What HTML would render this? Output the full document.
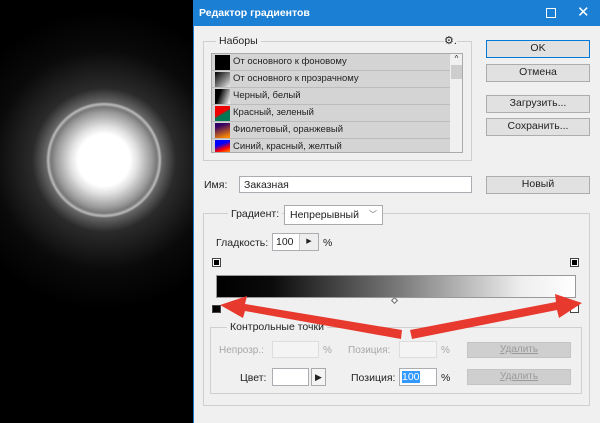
<!DOCTYPE html>
<html><head><meta charset="utf-8"><style>
*{margin:0;padding:0;box-sizing:border-box}
body{width:600px;height:423px;overflow:hidden;background:#000;position:relative;font-family:"Liberation Sans","DejaVu Sans",sans-serif;font-size:10px;color:#222}
.a{position:absolute}
.dlg{left:193px;top:0;width:407px;height:423px;background:#f0f0f0;border-left:1px solid #1a7bd0}
.title{left:193px;top:0;width:407px;height:26px;background:#1b7fd4;color:#fff;font-size:10.5px;font-weight:bold}
.btn{position:absolute;background:#e1e1e1;border:1px solid #adadad;text-align:center;font-size:10.5px;line-height:15px}
.grp{position:absolute;border:1px solid #cfcfcf}
.lbl{position:absolute;background:#f0f0f0;padding:0 3px;font-size:10.5px}
.row{position:absolute;left:0;width:238px;height:17px;background:#d4d4d4;border-bottom:1px solid #bcbcbc;font-size:9.5px;line-height:16px;padding-left:21px}
.sw{position:absolute;left:3px;top:1px;width:15px;height:15px}
.inp{position:absolute;background:#fff;border:1px solid #abadb3;font-size:10.5px}
.dis{color:#a8a8a8}
.dbtn{position:absolute;background:#cfcfcf;border:1px solid #c4c4c4;color:#9a9a9a;text-align:center;font-size:10px;line-height:14px;text-decoration:underline}
</style></head><body>
<div class="a" style="left:0;top:0;width:193px;height:423px;background:radial-gradient(circle at 104px 160px,#fff 0,#fff 26px,#e0e0e0 34px,#999 48px,#777 53px,#bbb 56px,#666 58px,#2a2a2a 72px,#0a0a0a 110px,#000 150px)"></div>
<div class="a dlg"></div>
<div class="a title"><span class="a" style="left:6px;top:7px">Редактор градиентов</span>
<span class="a" style="left:353px;top:8px;width:10px;height:10px;border:1px solid #fff"></span>
<span class="a" style="left:384px;top:3px;font-size:15px;font-weight:normal">✕</span></div>

<div class="grp" style="left:203px;top:41px;width:269px;height:120px"></div>
<div class="lbl" style="left:216px;top:35px">Наборы</div>
<div class="a" style="left:444px;top:34px;font-size:11px;background:#f0f0f0">⚙.</div>
<div class="a" style="left:211px;top:53px;width:252px;height:100px;border:1px solid #aaa;overflow:hidden;background:#d4d4d4">
<div class="row" style="top:0"><span class="sw" style="background:#000"></span>От основного к фоновому</div>
<div class="row" style="top:17px"><span class="sw" style="background:linear-gradient(135deg,#000,#888 60%,#eee)"></span>От основного к прозрачному</div>
<div class="row" style="top:34px"><span class="sw" style="background:linear-gradient(110deg,#000 30%,#fff)"></span>Черный, белый</div>
<div class="row" style="top:51px"><span class="sw" style="background:linear-gradient(150deg,#e00 45%,#075 55%)"></span>Красный, зеленый</div>
<div class="row" style="top:68px"><span class="sw" style="background:linear-gradient(160deg,#306 20%,#f80 90%)"></span>Фиолетовый, оранжевый</div>
<div class="row" style="top:85px"><span class="sw" style="background:linear-gradient(160deg,#00f 30%,#f00 60%,#fd0)"></span>Синий, красный, желтый</div>
<div class="a" style="left:238px;top:0;width:13px;height:100px;background:#f0f0f0;font-size:8px;text-align:center">^<div style="background:#cdcdcd;height:14px;margin:2px 1px"></div></div>
</div>

<div class="btn" style="left:486px;top:40px;width:104px;height:18px;border:1px solid #0078d7">OK</div>
<div class="btn" style="left:486px;top:64px;width:104px;height:18px">Отмена</div>
<div class="btn" style="left:486px;top:95px;width:104px;height:18px">Загрузить...</div>
<div class="btn" style="left:486px;top:118px;width:104px;height:18px">Сохранить...</div>

<div class="a" style="left:204px;top:179px;font-size:10.5px">Имя:</div>
<div class="inp" style="left:239px;top:176px;width:233px;height:17px;padding:2px 4px">Заказная</div>
<div class="btn" style="left:486px;top:176px;width:104px;height:18px">Новый</div>

<div class="grp" style="left:203px;top:213px;width:387px;height:193px"></div>
<div class="lbl" style="left:228px;top:208px">Градиент:</div>
<div class="inp" style="left:284px;top:205px;width:99px;height:20px;padding:3px 5px;border-color:#aaa">Непрерывный <span style="position:absolute;right:5px;font-size:8px;color:#666">﹀</span></div>
<div class="a" style="left:216px;top:237px;font-size:10.5px">Гладкость:</div>
<div class="inp" style="left:272px;top:233px;width:47px;height:18px;padding:2px 3px">100<span style="position:absolute;left:26px;top:0;width:19px;height:16px;background:#eee;border-left:1px solid #ccc;text-align:center;font-size:7px;line-height:16px">▶</span></div>
<div class="a" style="left:323px;top:237px;font-size:10.5px">%</div>

<div class="a" style="left:212px;top:258px;width:9px;height:9px;border:1px solid #444;background:#000;box-shadow:inset 0 0 0 1px #fff"></div>
<div class="a" style="left:570px;top:258px;width:9px;height:9px;border:1px solid #444;background:#000;box-shadow:inset 0 0 0 1px #fff"></div>
<div class="a" style="left:216px;top:275px;width:360px;height:23px;background:linear-gradient(90deg,#000,#0a0a0a 15%,#777 50%,#eee 85%,#fff);border:1px solid #999"></div>
<div class="a" style="left:392px;top:298px;width:5px;height:5px;border:1px solid #666;transform:rotate(45deg);background:#fff"></div>
<div class="a" style="left:212px;top:305px;width:9px;height:8px;border:1px solid #444;background:#000"></div>
<div class="a" style="left:570px;top:305px;width:9px;height:8px;border:1px solid #444;background:#fff"></div>

<div class="grp" style="left:210px;top:327px;width:372px;height:67px"></div>
<div class="lbl" style="left:227px;top:321px">Контрольные точки</div>
<div class="a dis" style="left:219px;top:345px;font-size:10px">Непрозр.:</div>
<div class="inp" style="left:272px;top:341px;width:47px;height:17px;border-color:#ddd;background:#f4f4f4"></div>
<div class="a dis" style="left:323px;top:345px">%</div>
<div class="a dis" style="left:348px;top:345px">Позиция:</div>
<div class="inp" style="left:399px;top:341px;width:38px;height:17px;border-color:#ddd;background:#f4f4f4"></div>
<div class="a dis" style="left:441px;top:345px">%</div>
<div class="dbtn" style="left:467px;top:342px;width:104px;height:16px">Удалить</div>
<div class="a" style="left:240px;top:372px;font-size:10.5px">Цвет:</div>
<div class="inp" style="left:272px;top:368px;width:37px;height:18px"></div>
<div class="a" style="left:311px;top:368px;width:15px;height:18px;border:1px solid #aaa;background:#f4f4f4;font-size:9px;text-align:center;line-height:16px">▶</div>
<div class="a" style="left:351px;top:372px;font-size:10.5px">Позиция:</div>
<div class="inp" style="left:399px;top:368px;width:38px;height:18px;padding:2px 2px"><span style="background:#3399ff;color:#fff">100</span></div>
<div class="a" style="left:441px;top:372px;font-size:10.5px">%</div>
<div class="dbtn" style="left:467px;top:369px;width:104px;height:16px">Удалить</div>

<svg class="a" style="left:0;top:0" width="600" height="423">
<g fill="#e8392e">
<polygon points="402,330 245,304 247,296 220,305 243,318 245,311 401,339"/>
<polygon points="410,330 556,302 555,294 582,303 559,318 557,310 412,339"/>
</g></svg>
</body></html>
